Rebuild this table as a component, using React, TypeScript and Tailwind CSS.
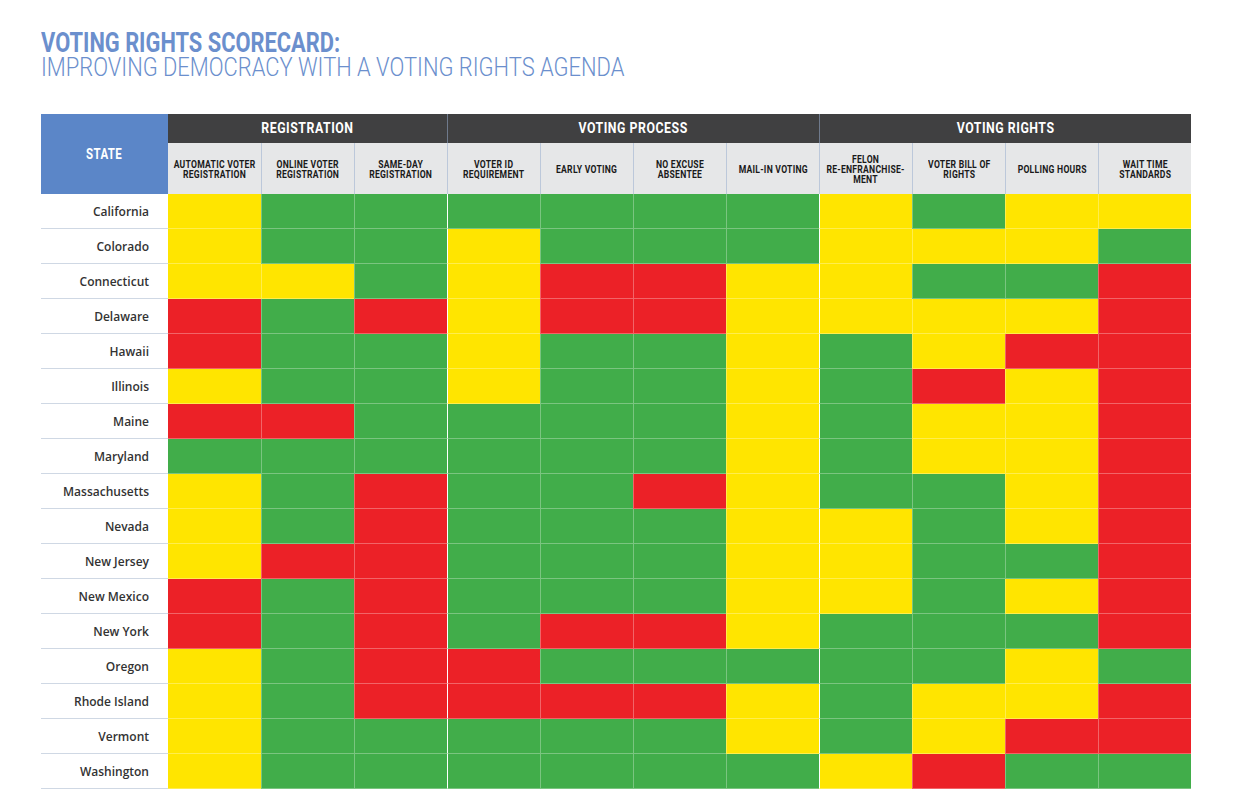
import React from 'react';

type Mark = 'Y' | 'G' | 'R';

const groups = [
  { title: 'REGISTRATION', span: 'col-span-3' },
  { title: 'VOTING PROCESS', span: 'col-span-4' },
  { title: 'VOTING RIGHTS', span: 'col-span-4' },
];

// sub headers, with forced line breaks
const columns: string[][] = [
  ['AUTOMATIC VOTER', 'REGISTRATION'],
  ['ONLINE VOTER', 'REGISTRATION'],
  ['SAME-DAY', 'REGISTRATION'],
  ['VOTER ID', 'REQUIREMENT'],
  ['EARLY VOTING'],
  ['NO EXCUSE', 'ABSENTEE'],
  ['MAIL-IN VOTING'],
  ['FELON', 'RE-ENFRANCHISE-', 'MENT'],
  ['VOTER BILL OF', 'RIGHTS'],
  ['POLLING HOURS'],
  ['WAIT TIME', 'STANDARDS'],
];

const rows: [string, string][] = [
  ['California', 'YGGGGGGYGYY'],
  ['Colorado', 'YGGYGGGYYYG'],
  ['Connecticut', 'YYGYRRYYGGR'],
  ['Delaware', 'RGRYRRYYYYR'],
  ['Hawaii', 'RGGYGGYGYRR'],
  ['Illinois', 'YGGYGGYGRYR'],
  ['Maine', 'RRGGGGYGYYR'],
  ['Maryland', 'GGGGGGYGYYR'],
  ['Massachusetts', 'YGRGGRYGGYR'],
  ['Nevada', 'YGRGGGYYGYR'],
  ['New Jersey', 'YRRGGGYYGGR'],
  ['New Mexico', 'RGRGGGYYGYR'],
  ['New York', 'RGRGRRYGGGR'],
  ['Oregon', 'YGRRGGGGGYG'],
  ['Rhode Island', 'YGRRRRYGYYR'],
  ['Vermont', 'YGGGGGYGYRR'],
  ['Washington', 'YGGGGGGYRGG'],
];

const fill: Record<Mark, string> = {
  Y: 'bg-[#ffe500]',
  G: 'bg-[#41ad4a]',
  R: 'bg-[#ec2127]',
};

const App = () => {
  return (
    <div className="min-h-screen w-[1242px] bg-white pl-[41px] pt-[31px] font-['Roboto',sans-serif]">
      {/* Title */}
      <div className="text-[#6b8fcd]">
        <div className="h-[24px] leading-[24px]">
          <span className="inline-block origin-left scale-x-[0.78] whitespace-nowrap text-[28px] font-bold">
            VOTING RIGHTS SCORECARD:
          </span>
        </div>
        <div className="mt-[3px] h-[20px] leading-[20px]">
          <span className="inline-block origin-left scale-x-[0.876] whitespace-nowrap text-[25px] font-light">
            IMPROVING DEMOCRACY WITH A VOTING RIGHTS AGENDA
          </span>
        </div>
      </div>

      {/* Scorecard grid */}
      <div className="mt-[36px] grid grid-cols-[127px_repeat(11,93px)]">
        <div className="row-span-2 flex items-center justify-center bg-[#5b86c8] text-white">
          <span className="inline-block scale-x-[0.82] text-[14px] font-bold tracking-[0.5px]">STATE</span>
        </div>
        {groups.map((g, i) => (
          <div
            key={g.title}
            className={`${g.span} flex h-[29px] items-center justify-center bg-[#404041] text-white ${i > 0 ? 'border-l border-[#6f7a8c]' : ''}`}
          >
            <span className="inline-block scale-x-[0.88] whitespace-nowrap text-[14px] font-bold tracking-[0.6px]">
              {g.title}
            </span>
          </div>
        ))}
        {columns.map((lines, i) => (
          <div
            key={i}
            className={`flex h-[51px] items-center justify-center bg-[#e6e7e8] pt-[3px] text-center ${i > 0 ? 'border-l border-[#bcc8da]' : ''}`}
          >
            <span className="inline-block scale-x-[0.86] whitespace-nowrap text-[10px] font-bold leading-[10px] tracking-[0.3px] text-[#1a1a1a]">
              {lines.map((l, j) => (
                <React.Fragment key={j}>
                  {j > 0 && <br />}
                  {l}
                </React.Fragment>
              ))}
            </span>
          </div>
        ))}

        {rows.map(([state, marks]) => (
          <React.Fragment key={state}>
            <div className="flex h-[35px] items-center justify-end border-b border-[#cfd8e4] pr-[19px] pt-[2px] font-['Open_Sans',sans-serif] text-[12px] font-semibold text-[#333333]">
              {state}
            </div>
            {marks.split('').map((m, i) => (
              <div
                key={i}
                className={`h-[35px] border-b border-white/30 ${fill[m as Mark]} ${
                  i === 3 || i === 7 ? 'border-l border-l-white' : i > 0 ? 'border-l border-l-white/30' : ''
                }`}
              />
            ))}
          </React.Fragment>
        ))}
      </div>
    </div>
  );
};

export default App;
